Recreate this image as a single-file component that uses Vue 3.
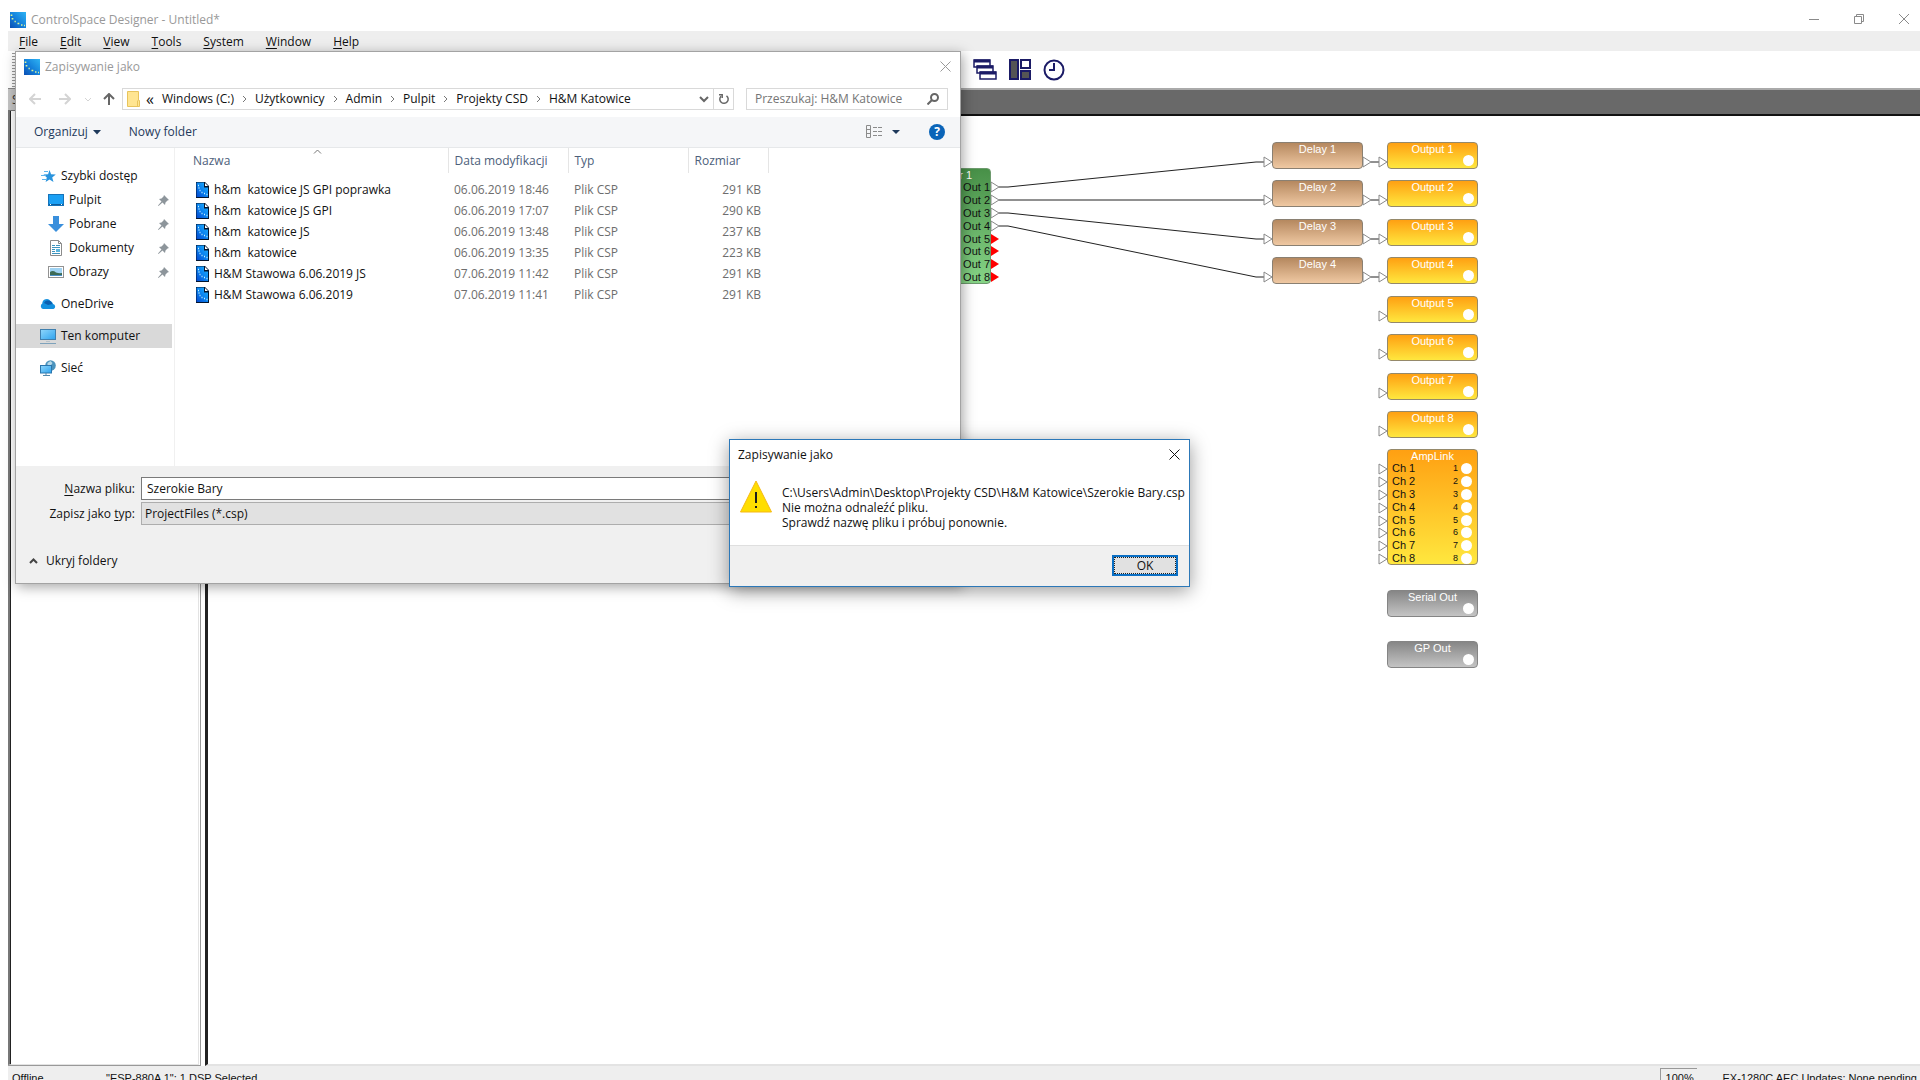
<script setup>
import { ref } from 'vue'

const menus = [['F', 'ile'], ['E', 'dit'], ['V', 'iew'], ['T', 'ools'], ['S', 'ystem'], ['W', 'indow'], ['H', 'elp']]
const crumbs = ['Windows (C:)', 'Użytkownicy', 'Admin', 'Pulpit', 'Projekty CSD', 'H&M Katowice']

const places = [
  { label: 'Szybki dostęp', icon: 'star' },
  { label: 'Pulpit', icon: 'desktop', pinned: true },
  { label: 'Pobrane', icon: 'download', pinned: true },
  { label: 'Dokumenty', icon: 'document', pinned: true },
  { label: 'Obrazy', icon: 'picture', pinned: true },
  { label: 'OneDrive', icon: 'cloud', top: true },
  { label: 'Ten komputer', icon: 'computer', top: true, selected: true },
  { label: 'Sieć', icon: 'network', top: true }
]

const files = [
  ['h&m  katowice JS GPI poprawka', '06.06.2019 18:46', '291 KB'],
  ['h&m  katowice JS GPI', '06.06.2019 17:07', '290 KB'],
  ['h&m  katowice JS', '06.06.2019 13:48', '237 KB'],
  ['h&m  katowice', '06.06.2019 13:35', '223 KB'],
  ['H&M Stawowa 6.06.2019 JS', '07.06.2019 11:42', '291 KB'],
  ['H&M Stawowa 6.06.2019', '07.06.2019 11:41', '291 KB']
]

const fileName = ref('Szerokie Bary')
const fileType = ref('csp')
const query = ref('')

const rowTops = [26, 64, 103, 141, 180, 218, 257, 295]
const delayX = 1064
const outputX = 1179
const blockW = 91
const blocks = [
  ...rowTops.slice(0, 4).map((y, i) => ({ kind: 'delay', title: `Delay ${i + 1}`, x: delayX, y })),
  ...rowTops.map((y, i) => ({ kind: 'output', title: `Output ${i + 1}`, x: outputX, y, lamp: true })),
  { kind: 'gray', title: 'Serial Out', x: outputX, y: 474, lamp: true },
  { kind: 'gray', title: 'GP Out', x: outputX, y: 525, lamp: true }
]
const channels = [1, 2, 3, 4, 5, 6, 7, 8]

const routerX = 783
const routerY = [71, 84, 97, 110, 123, 135, 148, 161]
const linkY = [353, 366, 379, 392, 405, 417, 430, 443]
const tri = (x, y) => `${x},${y - 5} ${x + 8},${y} ${x},${y + 5}`
const ports = [
  ...routerY.slice(0, 4).map((y) => tri(routerX, y)),
  ...rowTops.slice(0, 4).flatMap((y) => [tri(delayX - 8, y + 20), tri(delayX + blockW, y + 20)]),
  ...rowTops.map((y) => tri(outputX - 8, y + 20)),
  ...linkY.map((y) => tri(outputX - 8, y))
]
const muted = routerY.slice(4).map((y) => tri(routerX, y))
const wires = rowTops.slice(0, 4).flatMap((y, i) => [
  `${routerX + 8},${routerY[i]} ${routerX + 17},${routerY[i]} ${delayX - 16},${y + 20} ${delayX - 8},${y + 20}`,
  `${delayX + blockW + 8},${y + 20} ${outputX - 8},${y + 20}`
])
</script>

<template>
  <div class="app">
    <svg class="defs" aria-hidden="true">
      <defs>
        <linearGradient id="blue" x1="1" y1="0" x2="0" y2="1">
          <stop offset="0" stop-color="#2fb4f4" />
          <stop offset="0.5" stop-color="#1583dc" />
          <stop offset="1" stop-color="#0a4fb4" />
        </linearGradient>
        <linearGradient id="page" x1="1" y1="0" x2="0" y2="1">
          <stop offset="0" stop-color="#22b4ff" />
          <stop offset="0.5" stop-color="#0a84f0" />
          <stop offset="1" stop-color="#0348d0" />
        </linearGradient>
        <linearGradient id="screen" x1="0" y1="0" x2="1" y2="1">
          <stop offset="0" stop-color="#8fd6fb" />
          <stop offset="1" stop-color="#2ea3ee" />
        </linearGradient>
        <symbol id="logo" viewBox="0 0 16 16">
          <rect width="16" height="16" fill="url(#blue)" />
          <path d="M1.500 2.500v1.500M2.500 6v1.500M4.500 9.500h1.300M7.500 11.500h1.800M11 13h1.500M14 13.500h1" fill="none" stroke="#d9f59a" stroke-width="1.700" />
        </symbol>
        <symbol id="file" viewBox="0 0 13 16">
          <path d="M0 0h9l4 4v12H0z" fill="#02152e" />
          <path d="M.5.500H8v5h4V15H.5z" fill="url(#page)" />
          <path d="M9 1l3 3H9z" fill="#fff" />
          <path d="M2 3.500h1M2.500 6h1M3.500 8.500h1M5.500 10.500h1M8 11.500h1M10.500 12.500h1" stroke="#c8f4ff" stroke-width="1.400" />
        </symbol>
        <symbol id="star" viewBox="0 0 16 16">
          <path d="M9.500 2l1.600 4.200 4.700.2-3.600 3 1.300 4.700-4-2.600-3.900 2.600 1.200-4.700L3.500 6.400l4.600-.2z" fill="#2b94dd" />
          <path d="M4 3.500h4M1 7.500h5M2 11.500h4" stroke="#5db4ec" />
        </symbol>
        <symbol id="desktop" viewBox="0 0 16 16">
          <rect x=".5" y="2.500" width="15" height="11" fill="#1ba0f4" stroke="#1673b9" />
          <path d="M1 12.500h14" stroke="#0d5c9b" /><path d="M2 12.500h1M13 12.500h1" stroke="#fff" />
        </symbol>
        <symbol id="download" viewBox="0 0 16 16">
          <path d="M5 0h6v8h5l-8 8-8-8h5z" fill="#3a8fdc" />
        </symbol>
        <symbol id="document" viewBox="0 0 16 16">
          <path d="M2.500.5h8l3 3v12h-11z" fill="#fff" stroke="#8b8b8b" />
          <path d="M10.500.5v3h3" fill="none" stroke="#8b8b8b" />
          <path d="M4 5.500h3M8 5.500h4M4 7.500h8M4 9.500h3M4 11.500h3M4 13.500h8" stroke="#3d94c0" />
          <rect x="8" y="9" width="4" height="3" fill="#5cb5dd" />
        </symbol>
        <symbol id="picture" viewBox="0 0 16 16">
          <rect x=".5" y="2.500" width="15" height="11" fill="#fff" stroke="#929292" />
          <rect x="2" y="4" width="12" height="8" fill="#9fd2f2" />
          <path d="M2 8q3-2 6 .500 3 1 6 .500v3H2z" fill="#3c6a55" /><path d="M2 11h12v1H2z" fill="#4a8fc6" />
        </symbol>
        <symbol id="cloud" viewBox="0 0 16 16">
          <path d="M3 13a3 3 0 0 1-.7-5.500A4.500 4.500 0 0 1 10.500 5a4 4 0 0 1 2.500 3 2.600 2.600 0 0 1 .5 5z" fill="#1490df" />
          <path d="M4 7a4.500 4.500 0 0 1 7-1.500l1.500 2.500L8 9z" fill="#0a5fb0" />
        </symbol>
        <symbol id="computer" viewBox="0 0 16 16">
          <rect x=".5" y="1.500" width="15" height="10" fill="url(#screen)" stroke="#3f7fae" />
          <path d="M6 13.500h4" stroke="#b6c3cc" /><path d="M0 15.500h16" stroke="#7ea2bb" />
        </symbol>
        <symbol id="network" viewBox="0 0 16 16">
          <circle cx="10.500" cy="5.500" r="5.300" fill="#4b93bd" />
          <path d="M7.500 3l3-2 2 2-2 3-3 0z" fill="#b7d9e8" />
          <rect x=".5" y="5.500" width="11" height="7.500" fill="url(#screen)" stroke="#2b76ad" />
          <path d="M3 15.500h7M6 13v2" stroke="#5388ab" />
        </symbol>
      </defs>
    </svg>

    <header class="titlebar">
      <svg class="i16"><use href="#logo" /></svg>
      <h1>ControlSpace Designer - Untitled*</h1>
      <div class="winbtns">
        <button type="button" aria-label="Minimize"><svg width="10" height="10"><path d="M0 5.500h10" /></svg></button>
        <button type="button" aria-label="Restore"><svg width="10" height="10"><path d="M.5 2.500h7v7h-7zM2.500 2.500v-2h7v7h-2" /></svg></button>
        <button type="button" aria-label="Close"><svg width="10" height="10"><path d="M0 0l10 10M10 0L0 10" /></svg></button>
      </div>
    </header>

    <nav class="menubar">
      <button v-for="m in menus" :key="m[1]" type="button"><u>{{ m[0] }}</u>{{ m[1] }}</button>
    </nav>

    <div class="toolbar">
      <span class="grip"></span>
      <div class="tools">
        <button type="button" aria-label="Cascade windows">
          <svg width="24" height="22" fill="#fff" stroke="#1b1b66" stroke-width="1.500">
            <path d="M1 1h16v7H1zM4 7h16v7H4zM7 13h16v7H7z" />
            <path d="M1 2h16M4 8h16M7 14h16" stroke-width="3" />
          </svg>
        </button>
        <button type="button" aria-label="Tile windows">
          <svg width="22" height="22" stroke="#1b1b66" stroke-width="2">
            <path d="M1 1h8v19H1zM12 12h9v8h-9z" fill="#555" /><path d="M12 1h9v8h-9z" fill="#fff" />
          </svg>
        </button>
        <button type="button" aria-label="Schedule">
          <svg width="22" height="22" fill="none" stroke="#1b1b66" stroke-width="2">
            <circle cx="11" cy="11" r="9.500" /><path d="M11 4v7H6" />
          </svg>
        </button>
      </div>
    </div>

    <main class="main">
      <aside class="side">
        <h2>S</h2>
        <div class="tree"></div>
      </aside>
      <section class="design">
        <div class="band"></div>
        <div class="canvas">
          <svg class="wires">
            <polyline v-for="w in wires" :key="w" :points="w" class="wire" />
            <polygon v-for="p in ports" :key="p" :points="p" class="port" />
            <polygon v-for="p in muted" :key="p" :points="p" class="muted" />
          </svg>

          <div class="block router">
            <div class="title">r 1</div>
            <div v-for="n in channels" :key="n" class="ch" :style="{ top: routerY[n - 1] - 59 + 'px' }">Out {{ n }}</div>
          </div>

          <div v-for="b in blocks" :key="b.title" class="block" :class="b.kind" :style="{ left: b.x + 'px', top: b.y + 'px' }">
            <div class="title">{{ b.title }}</div>
            <span v-if="b.lamp" class="lamp"></span>
          </div>

          <div class="block output link">
            <div class="title">AmpLink</div>
            <div v-for="n in channels" :key="n" class="ch" :style="{ top: linkY[n - 1] - 341 + 'px' }">
              <span>Ch {{ n }}</span><small>{{ n }}</small><i></i>
            </div>
          </div>
        </div>
      </section>
    </main>

    <footer class="status">
      <span class="state">Offline</span>
      <span class="sel">"ESP-880A 1": 1 DSP Selected</span>
      <span class="zoom">100%</span>
      <span class="upd">EX-1280C AEC Updates: None pending</span>
    </footer>

    <form class="dialog save" role="dialog" aria-label="Zapisywanie jako" @submit.prevent>
      <div class="dlg-title">
        <svg class="i16"><use href="#logo" /></svg>
        <h2>Zapisywanie jako</h2>
        <button type="button" class="close" aria-label="Zamknij"><svg width="11" height="11"><path d="M.5 .5l10 10M10.500 .5l-10 10" /></svg></button>
      </div>

      <div class="address">
        <div class="arrows">
          <button type="button" disabled aria-label="Wstecz"><svg width="12" height="12"><path d="M12 6H1M6 1L1 6l5 5" /></svg></button>
          <button type="button" disabled class="next" aria-label="Dalej"><svg width="12" height="12"><path d="M0 6h11M6 1l5 5-5 5" /></svg></button>
          <button type="button" disabled class="small" aria-label="Ostatnie"><svg width="6" height="5"><path d="M0 1l3 3 3-3" /></svg></button>
          <button type="button" class="up" aria-label="W górę"><svg width="12" height="12"><path d="M6 12V1M1 6l5-5 5 5" /></svg></button>
        </div>
        <div class="path">
          <svg class="folder" width="13" height="16"><path d="M.5.5h11v9h1v6H.5z" fill="#ffe591" stroke="#e8c45c" /><path d="M10.500 9.500v6" stroke="#e8c45c" /></svg>
          <span class="more">«</span>
          <template v-for="(c, i) in crumbs" :key="c">
            <svg v-if="i" class="sep" width="21" height="8"><path d="M9 1l3 3-3 3" /></svg>
            <a href="#" @click.prevent>{{ c }}</a>
          </template>
          <button type="button" class="drop" aria-label="Poprzednie lokalizacje"><svg width="10" height="7"><path d="M1 1l4 4 4-4" /></svg></button>
          <button type="button" class="refresh" aria-label="Odśwież"><svg width="12" height="12"><path d="M8.500 2.800A4.200 4.200 0 1 1 3 3.200" /><path d="M1 1.800h3.200V5" /></svg></button>
        </div>
        <label class="search">
          <input v-model="query" type="search" placeholder="Przeszukaj: H&M Katowice" aria-label="Przeszukaj" />
          <svg width="12" height="12"><circle cx="7.500" cy="4.500" r="3.500" /><path d="M5 7l-4.500 4.500" /></svg>
        </label>
      </div>

      <div class="commands">
        <button type="button">Organizuj <svg width="8" height="5"><path d="M0 0h8L4 4.500z" fill="#1e395b" /></svg></button>
        <button type="button">Nowy folder</button>
        <div class="right">
          <button type="button" aria-label="Zmień widok">
            <svg width="34" height="14" fill="none" stroke="#8b8b8b"><path d="M.5.5h4v12h-4zM.5 4.500h4M.5 8.500h4M7 2.500h4M12 2.500h4M7 6.500h4M12 6.500h4M7 10.500h4M12 10.500h4" /><path d="M26 5h8l-4 4z" fill="#1e395b" stroke="none" /></svg>
          </button>
          <button type="button" class="help" aria-label="Pomoc">?</button>
        </div>
      </div>

      <div class="browser">
        <ul class="places">
          <li v-for="p in places" :key="p.label" :class="{ sub: p.pinned, top: p.top, selected: p.selected }">
            <svg class="i16"><use :href="'#' + p.icon" /></svg>
            <a href="#" @click.prevent>{{ p.label }}</a>
            <svg v-if="p.pinned" class="pin" width="11" height="11"><path d="M6 0l5 5-1.500.5-2 2L7 10 4.500 7.500.5 11l-.5-.5L3.500 6.500 1 4l2.500-.5 2-2z" fill="#8d959b" /></svg>
          </li>
        </ul>
        <div class="list">
          <svg class="sort" width="9" height="5"><path d="M1 4.500l3.500-3.500L8 4.500" /></svg>
          <table>
            <thead>
              <tr><th class="c1">Nazwa</th><th class="c2">Data modyfikacji</th><th class="c2">Typ</th><th class="c3">Rozmiar</th></tr>
            </thead>
            <tbody>
              <tr v-for="f in files" :key="f[0]">
                <td class="name"><svg width="13" height="16"><use href="#file" /></svg>{{ f[0] }}</td>
                <td>{{ f[1] }}</td>
                <td>Plik CSP</td>
                <td class="size">{{ f[2] }}</td>
              </tr>
            </tbody>
          </table>
        </div>
      </div>

      <div class="fields">
        <label for="fname"><u>N</u>azwa pliku:</label>
        <input id="fname" v-model="fileName" type="text" />
        <label for="ftype">Zapisz jako <u>t</u>yp:</label>
        <select id="ftype" v-model="fileType"><option value="csp">ProjectFiles (*.csp)</option></select>
      </div>
      <button type="button" class="hide"><svg width="9" height="6"><path d="M1 5l3.500-3.500L8 5" /></svg>Ukryj foldery</button>
    </form>

    <section class="dialog alert" role="alertdialog" aria-label="Zapisywanie jako">
      <div class="dlg-title">
        <h2>Zapisywanie jako</h2>
        <button type="button" class="close" aria-label="Zamknij"><svg width="11" height="11"><path d="M.5 .5l10 10M10.500 .5l-10 10" /></svg></button>
      </div>
      <div class="message">
        <svg width="32" height="33">
          <path d="M16 1L31.500 32H.5z" fill="#ffde00" stroke="#f5b914" />
          <path d="M15 12h2v11h-2zM15 26h2v2h-2z" fill="#1c1c1c" />
        </svg>
        <p>C:\Users\Admin\Desktop\Projekty CSD\H&amp;M Katowice\Szerokie Bary.csp<br />Nie można odnaleźć pliku.<br />Sprawdź nazwę pliku i próbuj ponownie.</p>
      </div>
      <div class="actions"><button type="button"><span>OK</span></button></div>
    </section>
  </div>
</template>

<style>
body { margin: 0; background: #fff; }
</style>

<style scoped>
* { box-sizing: border-box; }
.app {
  position: relative;
  display: flex;
  flex-direction: column;
  height: 100vh;
  padding-left: 8px;
  overflow: hidden;
  font: 12px/16px "Open Sans", "Noto Sans", sans-serif;
  color: #111;
}
.defs { position: absolute; width: 0; height: 0; }
.i16 { width: 16px; height: 16px; flex: none; }
button, input, select { font: inherit; color: inherit; }
button { padding: 0; border: 0; background: none; }
a { color: inherit; text-decoration: none; }
h1, h2, p, ul { margin: 0; padding: 0; font-size: inherit; font-weight: 400; }
svg { display: block; }

.titlebar { display: flex; align-items: center; gap: 5px; height: 31px; flex: none; padding: 8px 0 0 2px; color: #999; }
.titlebar h1 { flex: 1; }
.winbtns { display: flex; margin-right: -6px; }
.winbtns button { display: grid; place-items: center; width: 45px; height: 20px; margin-bottom: 2px; }
.winbtns svg { fill: none; stroke: #8a8a8a; }

.menubar { display: flex; gap: 22px; height: 20px; flex: none; padding: 1px 11px 0; background: #eee; }
.menubar u, .fields u { text-underline-offset: 2px; }

.toolbar { display: flex; height: 37px; flex: none; padding: 2px 4px 0; }
.grip { width: 4px; background: repeating-linear-gradient(#999 0 1px, #fff 1px 3px); }
.tools { display: flex; align-items: flex-start; gap: 12px; padding: 6px 0 0 957px; }

.main { display: flex; flex: 1; min-height: 0; gap: 4px; }
.side { display: flex; flex-direction: column; width: 193px; flex: none; border-right: 1px solid #999; border-bottom: 1px solid #999; }
.side h2 { height: 23px; flex: none; padding: 3px 4px; border-top: 1px solid #888; border-bottom: 1px solid #777; background: #c4c4c4; color: #333; }
.tree { flex: 1; margin-right: 1px; border: solid #e3e3e3; border-width: 0 1px 1px 0; border-left: 3px ridge #777; }
.design { display: flex; flex: 1; min-width: 0; flex-direction: column; border-left: 3px solid #222; border-bottom: 2px solid #e3e3e3; }
.band { height: 28px; flex: none; margin-left: -3px; background: #696969; border-top: 2px solid #aaa; border-bottom: 2px solid #111; }
.canvas { position: relative; flex: 1; font: 11px/13px "Liberation Sans", Arial, sans-serif; }
.wires { position: absolute; inset: 0; width: 100%; height: 100%; }
.wire { fill: none; stroke: #222; }
.port { fill: #fff; stroke: #888; }
.muted { fill: #f00; }

.block { position: absolute; width: 91px; height: 27px; border: 1px solid #8a8072; border-radius: 4px; }
.block .title { height: 12px; line-height: 12px; text-align: center; color: #fff; }
.delay { background: linear-gradient(#b5885f, #efc8a2); }
.output { background: linear-gradient(#ffa012, #ffe73e); border-color: #95896a; }
.gray { background: linear-gradient(#868686, #c4c4c4); border-color: #858585; }
.lamp { position: absolute; right: 3px; bottom: 2px; width: 11px; height: 11px; border-radius: 50%; background: #fff; }
.router { left: 692px; top: 52px; height: 116px; background: linear-gradient(#489048, #86d486); border-color: #6d9a6d; }
.router .title { padding-right: 18px; text-align: right; }
.ch { position: absolute; left: 0; right: 0; display: flex; align-items: center; height: 13px; color: #111; justify-content: flex-end; }
.link { left: 1179px; top: 333px; height: 116px; }
.link .ch { right: 5px; left: 4px; }
.link .ch span { flex: 1; }
.link small { font-size: 9px; padding-right: 3px; }
.link i { width: 11px; height: 11px; border-radius: 50%; background: #fff; }

.status { display: flex; align-items: flex-start; height: 14px; flex: none; overflow: hidden; background: #eee; font: 11px/14px "Liberation Sans", Arial, sans-serif; padding: 5px 3px 0 4px; white-space: nowrap; }
.state { width: 94px; }
.sel { flex: 1; }
.zoom { width: 37px; height: 20px; margin: -3px 26px 0 0; padding: 2px 5px; border: solid #999; border-width: 1px 0 0 1px; }

.dialog { position: absolute; display: flex; flex-direction: column; background: #fff; }
.dlg-title { display: flex; align-items: center; flex: none; }
.dlg-title h2 { flex: 1; }
.close svg { fill: none; stroke: currentColor; }

.save { left: 15px; top: 51px; width: 946px; border: 1px solid #a3a3a3; background: #f0f0f0; box-shadow: 2px 3px 12px rgba(0, 0, 0, 0.35); }
.save .dlg-title { gap: 5px; height: 28px; padding: 1px 9px 0 8px; background: #fff; color: #999; }
.address { display: flex; height: 37px; padding: 8px 12px 7px 13px; background: #fff; }
.arrows { display: flex; align-items: center; width: 93px; flex: none; }
.arrows button { width: 30px; height: 20px; color: #d4d4d4; }
.arrows button.next { width: 26px; }
.arrows button.small { width: 18px; }
.arrows button.up { width: 19px; color: #666; }
.arrows svg { fill: none; stroke: currentColor; stroke-width: 2; }
.arrows .small svg { stroke-width: 1; }
.path { display: flex; align-items: center; width: 612px; border: 1px solid #d9d9d9; }
.folder { margin: 0 6px 0 4px; fill: none; }
.more { width: 16px; font-size: 16px; }
.sep { fill: none; stroke: #777; flex: none; }
.drop { margin-left: auto; padding: 0 4px; }
.drop svg, .refresh svg { fill: none; stroke: #666; stroke-width: 2; }
.refresh { height: 100%; width: 20px; border-left: 1px solid #d9d9d9; padding-left: 4px; }
.refresh svg { stroke-width: 1.5; }
.search { display: flex; align-items: center; flex: 1; margin-left: 12px; padding: 0 8px; border: 1px solid #d9d9d9; }
.search input { flex: 1; min-width: 0; padding: 0; border: 0; outline: 0; background: none; appearance: none; }
.search input::placeholder { color: #757575; opacity: 1; }
.search svg { fill: none; stroke: #666; stroke-width: 2; }

.commands { display: flex; align-items: center; gap: 28px; height: 31px; padding: 0 15px 0 18px; background: #f5f6f8; border-bottom: 1px solid #e6e8ea; color: #1e395b; }
.commands button { display: flex; align-items: center; gap: 5px; }
.right { display: flex; align-items: center; gap: 29px; margin-left: auto; }
.commands .help { display: block; width: 16px; height: 16px; border-radius: 50%; background: #0a64b8; color: #fff; font-weight: 700; line-height: 16px; text-align: center; }

.browser { display: flex; height: 318px; background: #fff; }
.places { width: 159px; flex: none; padding-top: 16px; border-right: 1px solid #f0f0f0; list-style: none; }
.places li { display: flex; align-items: center; gap: 5px; height: 24px; margin-right: 2px; padding: 0 3px 0 24px; }
.places li.sub { padding-left: 32px; }
.places li.top { margin-top: 8px; }
.places .selected { background: #d9d9d9; }
.pin { margin-left: auto; }
.list { position: relative; flex: 1; padding-left: 12px; }
.sort { position: absolute; left: 138px; top: 1px; fill: none; stroke: #777; }
table { border-collapse: collapse; table-layout: fixed; width: 581px; color: #6d6d6d; }
th { height: 25px; padding: 1px 6px 0; border-right: 1px solid #e5e5e5; font-weight: 400; text-align: left; color: #4c607a; white-space: nowrap; }
.c1 { width: 261px; }
.c2 { width: 120px; }
.c3 { width: 80px; }
td { height: 21px; padding: 0 7px 0 6px; white-space: pre; }
tbody::before { content: ""; display: block; height: 6px; }
td.name { display: flex; align-items: center; gap: 5px; padding-left: 9px; color: #111; }
.size { text-align: right; }

.fields { display: grid; grid-template-columns: 119px 1fr; column-gap: 6px; row-gap: 2px; padding: 11px 12px 0 0; align-items: center; }
.fields label { text-align: right; }
.fields input { height: 23px; padding: 0 5px; border: 1px solid #7a7a7a; background: #fff; outline: 0; }
.fields select { height: 23px; padding: 0 3px; border: 1px solid #adadad; background: #e1e1e1; appearance: none; border-radius: 0; }
.hide { display: flex; align-items: center; gap: 8px; margin: 28px 0 14px 13px; align-self: flex-start; }
.hide svg { fill: none; stroke: #444; stroke-width: 2; }

.alert { left: 729px; top: 439px; width: 461px; border: 1px solid #2c78b8; box-shadow: 0 4px 18px rgba(0, 0, 0, 0.4); }
.alert .dlg-title { height: 30px; padding: 0 9px 0 8px; }
.alert .close { padding-bottom: 2px; }
.message { display: flex; gap: 10px; height: 75px; padding: 10px; }
.message svg { flex: none; }
.message p { padding-top: 5px; line-height: 15px; white-space: nowrap; }
.actions { display: flex; justify-content: flex-end; height: 41px; padding: 9px 11px; border-top: 1px solid #dfdfdf; background: #f0f0f0; }
.actions button { width: 66px; height: 21px; padding: 0; border: 2px solid #0a6fc4; background: #e1e1e1; }
.actions span { display: block; height: 17px; border: 1px dotted #222; line-height: 15px; }
</style>
